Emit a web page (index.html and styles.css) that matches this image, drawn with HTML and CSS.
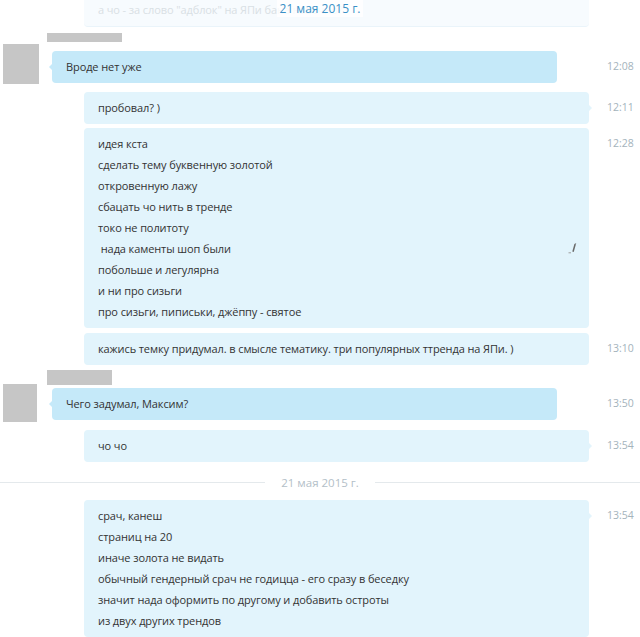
FILE: index.html
```html
<!DOCTYPE html>
<html>

<head>
  <meta charset="utf-8">
  <title>Чат</title>
  <meta name="viewport" content="width=device-width, initial-scale=1">

  <link rel="stylesheet" href="styles.css">

</head>

<body>
  <div id="chat">
    <div class="sticky-date"><span>21 мая 2015 г.</span></div>

    <div class="row out faded">
      <div class="bubble">а чо - за слово "адблок" на ЯПи бана навечно?</div>
      <div class="time"></div>
    </div>

    <div class="group">
      <div class="name-line"><div class="name name-a"></div></div>
      <div class="row in">
        <div class="avatar avatar-a"></div>
        <div class="bubble tail">Вроде нет уже</div>
        <div class="time">12:08</div>
      </div>
    </div>

    <div class="row out after-group">
      <div class="bubble tail">пробовал? )</div>
      <div class="time">12:11</div>
    </div>

    <div class="row out">
      <div class="bubble">
        <p>идея кста</p>
        <p>сделать тему буквенную золотой</p>
        <p>откровенную лажу</p>
        <p>сбацать чо нить в тренде</p>
        <p>токо не политоту</p>
        <p>&nbsp;нада каменты шоп были</p>
        <p>побольше и легулярна</p>
        <p>и ни про сизьги</p>
        <p>про сизьги, пиписьки, джёппу - святое</p>
        <svg class="edited" width="9" height="11" viewBox="0 0 9 11">
          <path d="M7.2 1 L5 8.8" stroke="#6a6a6a" stroke-width="1.5" fill="none" />
          <path d="M7.4 0.6 L7.9 0.2" stroke="#6a6a6a" stroke-width="1.3" fill="none" />
          <path d="M0.5 9.8 L3 9.8" stroke="#a0a0a0" stroke-width="1" fill="none" />
        </svg>
      </div>
      <div class="time">12:28</div>
    </div>

    <div class="row out loose">
      <div class="bubble">кажись темку придумал. в смысле тематику. три популярных ттренда на ЯПи. )</div>
      <div class="time">13:10</div>
    </div>

    <div class="group second">
      <div class="name-line"><div class="name name-b"></div></div>
      <div class="row in">
        <div class="avatar avatar-b"></div>
        <div class="bubble tail">Чего задумал, Максим?</div>
        <div class="time">13:50</div>
      </div>
    </div>

    <div class="row out after-group">
      <div class="bubble tail">чо чо</div>
      <div class="time">13:54</div>
    </div>

    <div class="date-sep"><span>21 мая 2015 г.</span></div>

    <div class="row out after-date">
      <div class="bubble tail">
        <p>срач, канеш</p>
        <p>страниц на 20</p>
        <p>иначе золота не видать</p>
        <p>обычный гендерный срач не годицца - его сразу в беседку</p>
        <p>значит нада оформить по другому и добавить остроты</p>
        <p>из двух других трендов</p>
      </div>
      <div class="time">13:54</div>
    </div>
  </div>
</body>

</html>
```

FILE: styles.css
```css
* {
  padding: 0px;
  margin: 0px;
  box-sizing: border-box;
}

body {
  background-color: #ffffff;
  font-family: "Open Sans", "Noto Sans", sans-serif;
  font-size: 11px;
  letter-spacing: -0.1px;
  color: #333333;
  overflow: hidden;
}

#chat {
  position: relative;
  width: 640px;
  height: 637px;
  overflow: hidden;
}

.sticky-date {
  position: absolute;
  top: 0;
  left: 0;
  right: 0;
  z-index: 2;
  text-align: center;
  line-height: 18px;
  font-size: 12px;
  letter-spacing: 0;
  color: #3b90c6;
}

.sticky-date span {
  padding: 0 3px;
  background-color: rgba(255, 255, 255, 0.8);
}

.row {
  display: flex;
  align-items: flex-start;
}

.row + .row {
  margin-top: 4px;
}

.row.loose {
  margin-top: 5px;
}

.bubble {
  position: relative;
  flex: 1;
  padding: 4.5px 14px 6.5px;
  line-height: 21px;
  border-radius: 4px;
  white-space: nowrap;
}

.bubble p {
  line-height: 21px;
}

.out .bubble {
  margin-left: 84px;
  margin-right: 18px;
  background-color: #e2f4fc;
}

.in .bubble {
  margin-left: 13px;
  margin-right: 50px;
  background-color: #c5e9f9;
}

.out .bubble.tail::after {
  content: "";
  position: absolute;
  right: -3px;
  top: 13px;
  border-top: 3px solid transparent;
  border-bottom: 3px solid transparent;
  border-left: 3px solid #e2f4fc;
}

.in .bubble.tail::after {
  content: "";
  position: absolute;
  left: -3px;
  top: 13px;
  border-top: 3px solid transparent;
  border-bottom: 3px solid transparent;
  border-right: 3px solid #c5e9f9;
}

.time {
  width: 33px;
  padding-top: 4.5px;
  line-height: 21px;
  font-size: 10.5px;
  letter-spacing: 0;
  color: #a4b3bc;
}

.faded {
  margin-top: -6px;
}

.faded .bubble {
  background-color: #f7fbfe;
  border-bottom: 1px solid #eaf4fa;
  color: #d9e0e4;
}

.group {
  margin-top: 6px;
}

.name-line {
  height: 18px;
}

.name {
  margin-left: 47px;
  background-color: #c6c6c6;
}

.name-a {
  margin-top: 2px;
  width: 75px;
  height: 9px;
}

.name-b {
  margin-top: -1px;
  width: 65px;
  height: 15px;
}

.second {
  margin-top: 6px;
}

.avatar {
  margin-left: 3px;
  background-color: #c6c6c6;
}

.avatar-a {
  width: 36px;
  height: 40px;
  margin-top: -7px;
}

.avatar-b {
  width: 34px;
  height: 38px;
  margin-top: -4px;
  margin-right: 2px;
}

.after-group {
  margin-top: 8px;
}

.edited {
  position: absolute;
  right: 12px;
  top: 115px;
}

.date-sep {
  display: flex;
  align-items: center;
  margin-top: 10px;
  height: 20px;
  font-size: 11.5px;
  letter-spacing: 0;
  color: #b3c0c8;
}

.date-sep::before,
.date-sep::after {
  content: "";
  flex: 1;
  height: 1px;
  background-color: #e4e9ec;
}

.date-sep span {
  padding: 0 16px;
}

.after-date {
  margin-top: 8px;
}
```
